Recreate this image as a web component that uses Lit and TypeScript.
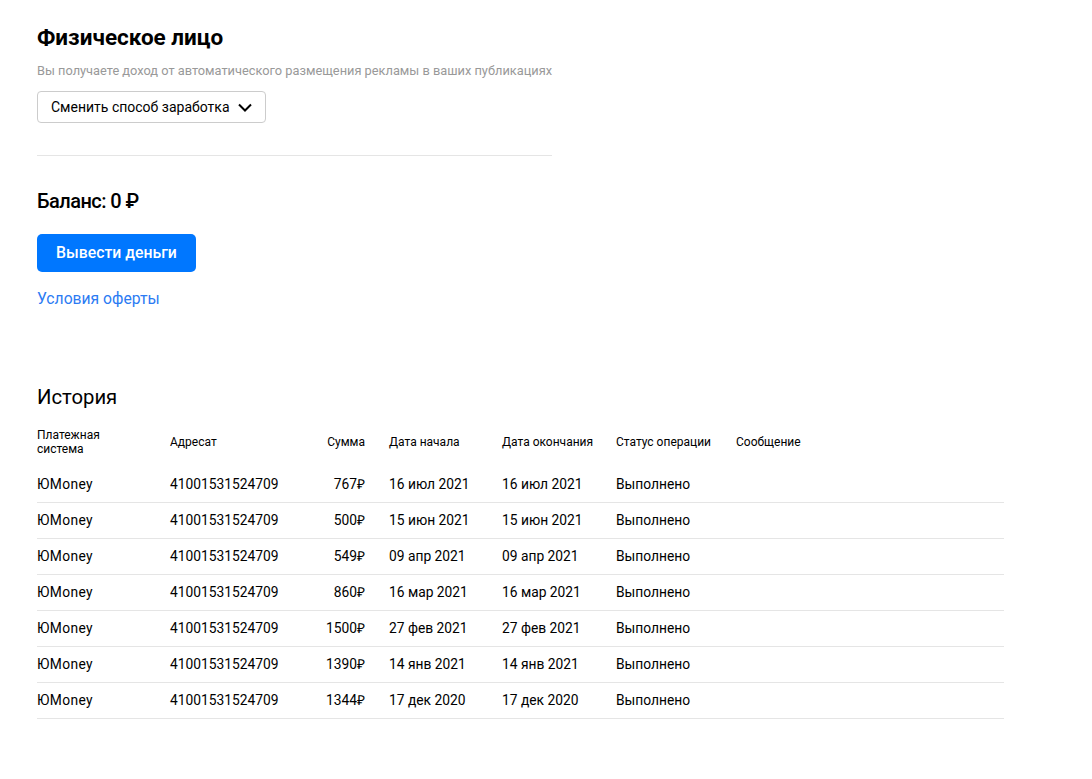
import { LitElement, html, css } from "lit";
import { customElement } from "lit/decorators.js";

const rows = [
  ["767", "16 июл 2021"],
  ["500", "15 июн 2021"],
  ["549", "09 апр 2021"],
  ["860", "16 мар 2021"],
  ["1500", "27 фев 2021"],
  ["1390", "14 янв 2021"],
  ["1344", "17 дек 2020"],
];

@customElement("app-root")
export class AppRoot extends LitElement {
  render() {
    return html`
      <div class="page">
        <h1>Физическое лицо</h1>
        <p class="hint">Вы получаете доход от автоматического размещения рекламы в ваших публикациях</p>
        <button class="select">
          Сменить способ заработка
          <svg width="14" height="9" viewBox="0 0 14 9"><path d="M1 1.5l6 6 6-6" fill="none" stroke="#000" stroke-width="2"/></svg>
        </button>
        <div class="divider"></div>
        <div class="balance">Баланс: 0 ₽</div>
        <button class="primary">Вывести деньги</button>
        <a class="link" href="#">Условия оферты</a>
        <h2>История</h2>
        <table>
          <thead>
            <tr>
              <th class="c1">Платежная<br />система</th>
              <th class="c2">Адресат</th>
              <th class="c3">Сумма</th>
              <th class="c4">Дата начала</th>
              <th class="c5">Дата окончания</th>
              <th class="c6">Статус операции</th>
              <th>Сообщение</th>
            </tr>
          </thead>
          <tbody>
            ${rows.map(
              ([sum, date]) => html`
                <tr>
                  <td class="provider">ЮMoney</td>
                  <td>41001531524709</td>
                  <td class="c3">${sum}<span class="rub">₽</span></td>
                  <td>${date}</td>
                  <td>${date}</td>
                  <td>Выполнено</td>
                  <td></td>
                </tr>
              `
            )}
          </tbody>
        </table>
      </div>
    `;
  }

  static styles = css`
    :host {
      display: block;
      font-family: Roboto, "Liberation Sans", sans-serif;
      color: #000;
    }
    .page {
      padding: 24px 0 60px 37px;
      width: 967px;
    }
    h1 {
      margin: 0;
      font-size: 22.5px;
      line-height: 26px;
      font-weight: 700;
    }
    .hint {
      margin: 13px 0 0;
      font-size: 12.8px;
      line-height: 16px;
      color: #999;
      white-space: nowrap;
    }
    .select {
      display: flex;
      align-items: center;
      gap: 8px;
      margin-top: 12px;
      height: 32px;
      padding: 0 13px;
      background: #fff;
      border: 1px solid #ccc;
      border-radius: 4px;
      font: inherit;
      font-size: 14px;
      color: #000;
    }
    .divider {
      width: 515px;
      height: 1px;
      margin-top: 32px;
      background: #e5e5e5;
    }
    .balance {
      margin-top: 33px;
      font-size: 20px;
      line-height: 24px;
      font-weight: 500;
      letter-spacing: -0.55px;
    }
    .primary {
      display: block;
      margin-top: 21px;
      width: 159px;
      height: 38px;
      padding: 0 0 2px;
      border: 0;
      border-radius: 5px;
      background: #07f;
      color: #fff;
      font: inherit;
      font-size: 15.8px;
      font-weight: 500;
    }
    .link {
      display: block;
      margin-top: 17px;
      font-size: 15.7px;
      line-height: 20px;
      color: #2b7bf3;
      text-decoration: none;
    }
    h2 {
      margin: 75px 0 0;
      font-size: 20.3px;
      line-height: 26px;
      font-weight: 400;
    }
    table {
      width: 100%;
      margin-top: 16px;
      border-collapse: collapse;
      table-layout: fixed;
    }
    th {
      height: 30px;
      padding: 1px 0 10px;
      font-size: 12px;
      line-height: 14px;
      font-weight: 400;
      text-align: left;
      white-space: nowrap;
    }
    td {
      height: 33px;
      padding: 0 0 2px;
      font-size: 13.8px;
      line-height: 16px;
      border-bottom: 1px solid #e5e5e5;
      white-space: nowrap;
    }
    .provider {
      letter-spacing: 0.4px;
    }
    .rub {
      font-family: "Open Sans", sans-serif;
      font-size: 13.8px;
      line-height: 0;
    }
    .c1 { width: 133px; }
    .c2 { width: 133px; }
    th.c3, td.c3 { width: 62px; text-align: right; padding-right: 24px; }
    .c4 { width: 113px; }
    .c5 { width: 114px; }
    .c6 { width: 120px; }
  `;
}
